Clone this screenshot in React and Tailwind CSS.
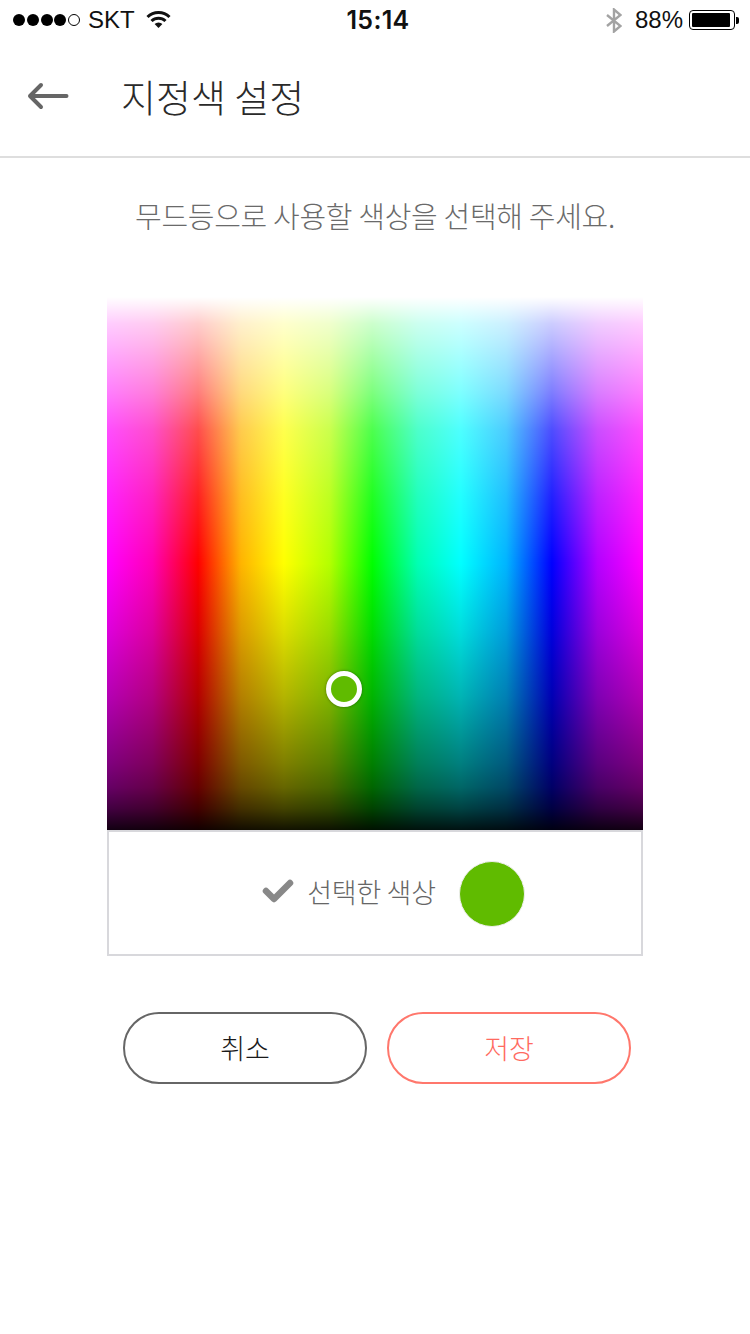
export default function App() {
  const kr = "font-['Noto_Sans_CJK_KR','Liberation_Sans',sans-serif]";
  return (
    <div className={`w-[750px] h-[1334px] bg-white flex flex-col items-center ${kr}`}>
      {/* status bar */}
      <div className="w-full h-[40px] flex items-center pl-[13px] pr-[11px] text-[24px] text-[#111] font-['Liberation_Sans',sans-serif]">
        <div className="flex-1 flex items-center">
          <div className="flex items-center gap-[1.75px]">
            {[0, 1, 2, 3].map((i) => (
              <span key={i} className="w-[12px] h-[12px] rounded-full bg-black" />
            ))}
            <span className="w-[12px] h-[12px] rounded-full border border-black" />
          </div>
          <span className="ml-[8px] leading-none">SKT</span>
          <svg className="ml-[11px] mb-[3px]" width="25" height="18" viewBox="0 0 25 18" fill="none" stroke="#111" strokeWidth="3">
            <path d="M12.5 18 L8.6 14.1 A5.5 5.5 0 0 1 16.4 14.1 Z" fill="#111" stroke="none" />
            <path d="M5.5 11 A10 10 0 0 1 19.5 11" />
            <path d="M1.5 7 A15.5 15.5 0 0 1 23.5 7" />
          </svg>
        </div>
        <span className="ml-[4px] font-semibold leading-none text-[25px] tracking-[0.3px] font-['Inter',sans-serif]">15:14</span>
        <div className="flex-1 flex items-center justify-end">
          <svg width="16" height="25" viewBox="0 0 16 25" fill="none" stroke="#a3a3a3" strokeWidth="2.4">
            <path d="M1 7 L14.5 18 L8 23.5 L8 1.5 L14.5 7 L1 18" />
          </svg>
          <span className="ml-[13px] leading-none">88%</span>
          <div className="ml-[6px] w-[46px] h-[20px] rounded-[4px] border border-black p-[2px] flex">
            <div className="w-[38px] h-full bg-black rounded-[1px]" />
          </div>
          <div className="ml-[1px] w-[3px] h-[7px] bg-black rounded-r-[2px]" />
        </div>
      </div>

      {/* header */}
      <div className="w-full h-[118px] border-b-2 border-[#dedede] flex items-center pl-[27px] pb-[4px]">
        <svg width="42" height="32" viewBox="0 0 42 32" fill="none" stroke="#666" strokeWidth="4" strokeLinecap="round" strokeLinejoin="round">
          <path d="M39.5 16 H3 M14 5 L3 16 L14 27" />
        </svg>
        <h1 className="ml-[52px] text-[38px] leading-none font-light text-[#2a2a2a]">지정색 설정</h1>
      </div>

      <p className="mt-[37px] text-[29px] leading-[40px] font-light text-[#6a6a6a] tracking-[-0.3px]">무드등으로 사용할 색상을 선택해 주세요.</p>

      {/* picker */}
      <div className="relative mt-[62px] w-[536px] h-[533px] bg-[linear-gradient(to_bottom,rgba(255,255,255,1)_0%,rgba(255,255,255,0.8)_5%,rgba(255,255,255,0.62)_12.5%,rgba(255,255,255,0.5)_17.5%,rgba(255,255,255,0.3)_25%,rgba(255,255,255,0.13)_37.5%,rgba(255,255,255,0)_50%),linear-gradient(to_bottom,rgba(0,0,0,0)_50%,rgba(0,0,0,0.134)_62.5%,rgba(0,0,0,0.293)_75%,rgba(0,0,0,0.5)_87.5%,rgba(0,0,0,0.6)_92%,rgba(0,0,0,0.74)_96%,rgba(0,0,0,0.93)_100%),linear-gradient(to_right,#ff00ff_0%,#ff00b4_8.5%,#ff0000_17%,#ffb400_25%,#ffff00_33%,#b4ff00_41.5%,#00ff00_49.5%,#00ffb4_58%,#00ffff_66%,#00b4ff_74.5%,#0000ff_83%,#b400ff_91.5%,#ff00ff_100%)]">
        <div className="absolute left-[219px] top-[374px] w-[36px] h-[36px] rounded-full border-[5px] border-white bg-[#60bb00] shadow-[0_0_3px_rgba(0,0,0,0.4)]" />
      </div>

      {/* selected */}
      <div className="w-[536px] h-[126px] border-2 border-[#d8d8dc] flex items-center justify-center pl-[37px]">
        <svg className="mb-[4px]" width="32" height="24" viewBox="0 0 32 24" fill="none" stroke="#888" strokeWidth="6.5" strokeLinecap="round" strokeLinejoin="round">
          <path d="M4 12 L12 20 L28 4" />
        </svg>
        <span className="ml-[13px] mb-[4px] text-[27px] leading-none font-light text-[#666] tracking-[-0.3px]">선택한 색상</span>
        <div className="ml-[23px] mt-[2px] w-[66px] h-[66px] rounded-full bg-[#60bb00] border border-[#eeeeee]" />
      </div>

      {/* buttons */}
      <div className="mt-[56px] ml-[4px] flex gap-[20px]">
        <button className="w-[244px] h-[72px] rounded-full border-2 border-[#666] pb-[2px] text-[27px] font-light text-[#1a1a1a] leading-none">취소</button>
        <button className="w-[244px] h-[72px] rounded-full border-2 border-[#ff776c] pb-[2px] text-[27px] font-light text-[#ff6a5f] leading-none">저장</button>
      </div>
    </div>
  );
}
